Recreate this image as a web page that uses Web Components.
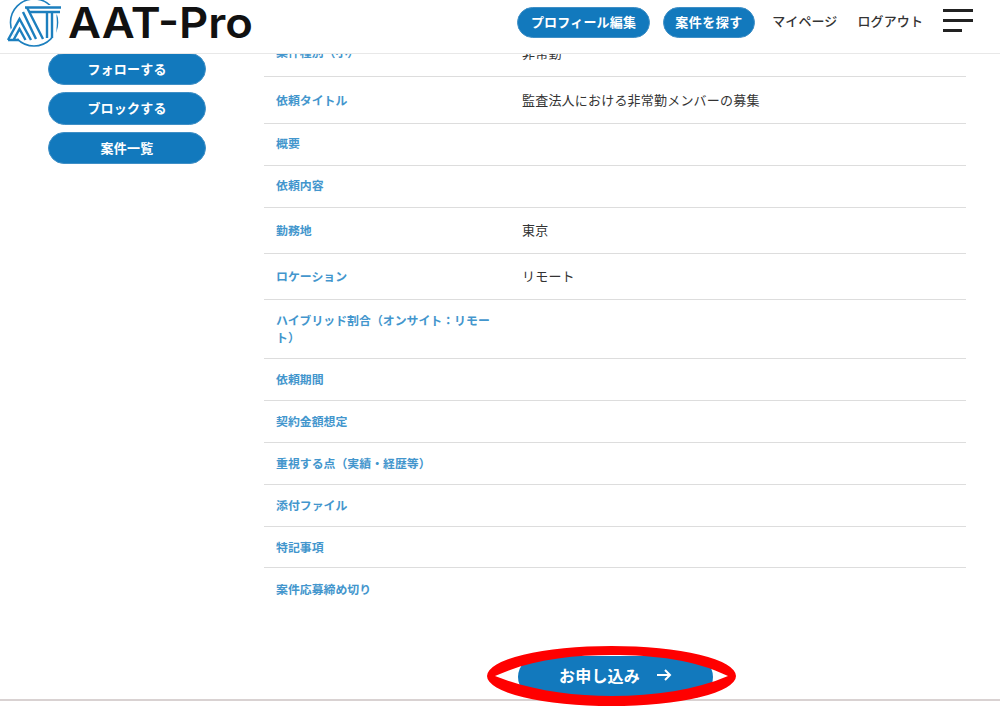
<!DOCTYPE html>
<html lang="ja">
<head>
<meta charset="utf-8">
<title>AAT-Pro</title>
<style>
html, body { margin: 0; height: 706px; overflow: hidden; background: #fff; }
body { font-family: "Noto Sans CJK JP", "Noto Sans", sans-serif; color: #333; }
</style>
</head>
<body>
<app-page>
  <site-header slot="header"></site-header>
  <side-menu slot="side">
    <pill-button>フォローする</pill-button>
    <pill-button>ブロックする</pill-button>
    <pill-button>案件一覧</pill-button>
  </side-menu>
  <detail-table slot="main">
    <detail-row class="first" label="案件種別（小）">非常勤</detail-row>
    <detail-row h="47" label="依頼タイトル">監査法人における非常勤メンバーの募集</detail-row>
    <detail-row h="42" pad="4" label="概要"></detail-row>
    <detail-row h="42" pad="4" label="依頼内容"></detail-row>
    <detail-row h="46" label="勤務地">東京</detail-row>
    <detail-row h="46" label="ロケーション">リモート</detail-row>
    <detail-row h="59" label="ハイブリッド割合（オンサイト：リモート）"></detail-row>
    <detail-row h="42" label="依頼期間"></detail-row>
    <detail-row h="42" label="契約金額想定"></detail-row>
    <detail-row h="42" label="重視する点（実績・経歴等）"></detail-row>
    <detail-row h="42" label="添付ファイル"></detail-row>
    <detail-row h="41" label="特記事項"></detail-row>
    <detail-row h="42" label="案件応募締め切り" last></detail-row>
  </detail-table>
  <apply-bar slot="apply"></apply-bar>
</app-page>

<script>
class AppPage extends HTMLElement {
    constructor() {
        super();
        this.attachShadow({mode: 'open'}).innerHTML = `
        <style>
            :host { display: flex; flex-direction: column; width: 1000px; height: 706px; overflow: hidden; }
            .header { flex: none; position: relative; z-index: 2; }
            .body { flex: none; display: grid; grid-template-columns: 264px 702px; height: 552px; }
            .applyrow { flex: none; }
        </style>
        <div class="header"><slot name="header"></slot></div>
        <div class="body">
            <slot name="side"></slot>
            <slot name="main"></slot>
        </div>
        <div class="applyrow"><slot name="apply"></slot></div>`;
    }
}

class SiteHeader extends HTMLElement {
    constructor() {
        super();
        this.attachShadow({mode: 'open'}).innerHTML = `
        <style>
            :host { display: flex; align-items: flex-start; height: 53px; background: #fff; border-bottom: 1px solid #e8e8e8; padding-right: 27px; }
            .logo { display: flex; align-items: flex-start; }
            .logo svg { display: block; flex: none; overflow: visible; }
            nav { margin-left: auto; display: flex; align-items: center; height: 31px; margin-top: 7px; font-size: 13px; font-weight: 700; color: #333; }
            .btn { background: #1279bd; color: #fff; border-radius: 16px; height: 31px; line-height: 28px; padding: 0 12.5px; letter-spacing: .2px; border: 1px solid #3f8fc6; box-sizing: border-box; }
            .btn + .btn { margin-left: 13px; padding: 0 11.5px; letter-spacing: .5px; }
            .link { margin-left: 20px; font-weight: 500; letter-spacing: .1px; line-height: 28px; height: 29px; align-self: flex-start; }
            .btn + .link { margin-left: 17px; }
            .burger { margin-left: 20px; display: grid; gap: 7px; width: 30px; align-self: flex-start; margin-top: 2px; }
            .burger i { display: block; height: 3px; background: #222; }
            .burger i:last-child { width: 19px; }
        </style>
        <div class="logo">
            <svg width="68" height="50" viewBox="0 0 68 50" fill="none">
                <circle cx="34" cy="22.5" r="23.5" stroke="#1c7fbe" stroke-width="1.6"/>
                <path d="M25 7.5 H61 M29 12 H60 M47 12 V38 M54 12 V38 M26 8 L42 40 M21 14 L33 38 M8 40 L19.5 19 L31 40 M14 40 L19.5 30 L25 40" stroke="#fff" stroke-width="5"/>
                <g stroke="#1c7fbe" stroke-width="2.4">
                    <path d="M25 7.5 H61 M29 12 H60 M47 12 V38 M52 12 V38"/>
                    <path d="M27 7.5 L43 39 M23 12 L36 39"/>
                    <path d="M8 40 L19.5 19 L31 40 M13.5 40 L19.5 29 L25.5 40 M8 40 H19"/>
                </g>
            </svg>
            <svg width="190" height="50" viewBox="0 0 190 50">
                <text x="0" y="38" textLength="185" lengthAdjust="spacingAndGlyphs" font-family="Inter, sans-serif" font-weight="600" font-size="42.5" fill="#111">AAT-Pro</text>
            </svg>
        </div>
        <nav>
            <span class="btn">プロフィール編集</span>
            <span class="btn">案件を探す</span>
            <span class="link">マイページ</span>
            <span class="link">ログアウト</span>
            <span class="burger"><i></i><i></i><i></i></span>
        </nav>`;
    }
}

class SideMenu extends HTMLElement {
    constructor() {
        super();
        this.attachShadow({mode: 'open'}).innerHTML = `
        <style>
            :host { display: flex; flex-direction: column; gap: 7px; padding: 0 0 0 48px; margin-top: -1.5px; width: 158px; }
        </style>
        <slot></slot>`;
    }
}

class PillButton extends HTMLElement {
    constructor() {
        super();
        this.attachShadow({mode: 'open'}).innerHTML = `
        <style>
            :host { display: block; height: 32.5px; line-height: 30px; box-sizing: border-box; text-align: center; background: #1279bd; border: 1px solid #3f8fc6; border-radius: 17px; color: #fff; font-size: 13px; font-weight: 700; letter-spacing: .2px; }
        </style>
        <slot></slot>`;
    }
}

class DetailTable extends HTMLElement {
    constructor() {
        super();
        this.attachShadow({mode: 'open'}).innerHTML = `
        <style>
            :host { display: block; height: 552px; overflow: hidden; }
        </style>
        <slot></slot>`;
    }
}

class DetailRow extends HTMLElement {
    constructor() {
        super();
        const label = this.getAttribute('label');
        const h = this.getAttribute('h') || 23;
        const pad = this.getAttribute('pad') || 2;
        this.attachShadow({mode: 'open'}).innerHTML = `
        <style>
            :host { display: grid; grid-template-columns: 258px 1fr; align-items: center; box-sizing: border-box; height: ${h}px; padding-bottom: ${pad}px; border-bottom: 1px solid #ddd; }
            :host([last]) { border-bottom: 0; }
            :host(.first) { overflow: hidden; align-items: start; padding-bottom: 0; }
            :host(.first) .l, :host(.first) .v { margin-top: -11px; }
            .l { padding-left: 12px; width: 224px; color: #4396cd; font-size: 11.9px; font-weight: 700; line-height: 17px; }
            .v { font-size: 13px; color: #333; letter-spacing: .2px; }
        </style>
        <div class="l">${label}</div>
        <div class="v"><slot></slot></div>`;
    }
}

class ApplyBar extends HTMLElement {
    constructor() {
        super();
        this.attachShadow({mode: 'open'}).innerHTML = `
        <style>
            :host { display: block; position: relative; height: 100px; }
            .wrap { padding: 50px 0 0 518px; box-sizing: border-box; height: 95px; border-bottom: 2px solid #d9d2d2; }
            .btn { display: flex; align-items: center; justify-content: center; gap: 16px; width: 195px; height: 42px; padding-bottom: 5px; box-sizing: border-box; background: #1279bd; border-radius: 21px; color: #fff; font-size: 16px; font-weight: 700; letter-spacing: .2px; }
            .btn svg { display: block; }
            /* red marker drawn over the button */
            .mark { position: absolute; left: 487px; top: 40px; pointer-events: none; }
        </style>
        <div class="wrap">
            <div class="btn">お申し込み
                <svg width="16" height="14" viewBox="0 0 16 14" fill="none" stroke="#fff" stroke-width="2"><path d="M1 7 H14 M9 2 L14 7 L9 12"/></svg>
            </div>
        </div>
        <svg class="mark" width="250" height="60" viewBox="0 0 250 60">
            <path fill="#f00" fill-rule="evenodd" d="M0 30 A124.5 30 0 0 1 249 30 A124.5 30 0 0 1 0 30 Z M8 30 C43 14 83 9 125 9 C168 9 208 14 241 30 C208 44 168 50 125 50 C83 50 43 44 8 30 Z"/>
        </svg>`;
    }
}

customElements.define('app-page', AppPage);
customElements.define('site-header', SiteHeader);
customElements.define('side-menu', SideMenu);
customElements.define('pill-button', PillButton);
customElements.define('detail-table', DetailTable);
customElements.define('detail-row', DetailRow);
customElements.define('apply-bar', ApplyBar);
</script>
</body>
</html>
